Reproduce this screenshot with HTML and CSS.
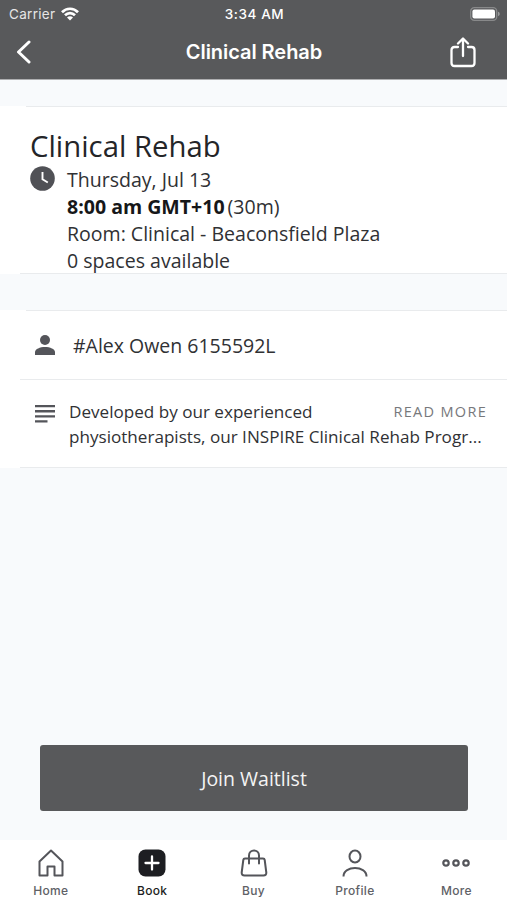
FILE: index.html
```html
<!DOCTYPE html>
<html lang="en">
<head>
    <meta charset="UTF-8">
    <meta name="viewport" content="width=device-width, initial-scale=1.0">
    <title>Clinical Rehab</title>
    <link rel="stylesheet" href="styles.css">
</head>
<body>

<header class="header">
    <div class="status-bar">
        <div class="carrier">
            <span>Carrier</span>
            <svg width="18" height="14" viewBox="0 0 18 14" fill="none" stroke="#fff" stroke-width="2.7">
                <path d="M1 5.2C5.5.6 12.5.6 17 5.2"/>
                <path d="M4 8.3C6.9 5.4 11.1 5.4 14 8.3"/>
                <path d="M9 13.6L6 10.6C7.7 8.9 10.3 8.9 12 10.6Z" fill="#fff" stroke="none"/>
            </svg>
        </div>
        <div class="time">3:34 AM</div>
        <div class="battery">
            <svg width="30" height="14" viewBox="0 0 30 14">
                <rect x=".7" y=".7" width="26" height="12.6" rx="3.6" fill="none" stroke="#88898a" stroke-width="1.3"/>
                <rect x="2.4" y="2.4" width="22.6" height="9.2" rx="2" fill="#fff"/>
                <path d="M28 4.8C30.3 5.4 30.3 8.6 28 9.2Z" fill="#98999a"/>
            </svg>
        </div>
    </div>
    <div class="nav-bar">
        <a class="back" href="#">
            <svg width="16" height="24" viewBox="0 0 16 24" fill="none" stroke="#fff" stroke-width="3" stroke-linecap="round" stroke-linejoin="round">
                <path d="M13 2L2.5 12L13 22"/>
            </svg>
        </a>
        <h1>Clinical Rehab</h1>
        <a class="share" href="#">
            <svg width="26" height="31" viewBox="0 0 26 31" fill="none" stroke="#fff" stroke-width="2.3" stroke-linecap="round" stroke-linejoin="round">
                <path d="M8 10H4.5Q1.5 10 1.5 13V26Q1.5 29 4.5 29H21.5Q24.5 29 24.5 26V13Q24.5 10 21.5 10H18"/>
                <path d="M13 19V2M8 6.5L13 1.5L18 6.5"/>
            </svg>
        </a>
    </div>
</header>

<main class="content">
    <section class="card summary">
        <h2>Clinical Rehab</h2>
        <div class="details">
            <svg width="25" height="25" viewBox="0 0 25 25">
                <circle cx="12.5" cy="12.5" r="12.3" fill="#505156"/>
                <path d="M12.5 6V13.2L17.8 16.5" fill="none" stroke="#fff" stroke-width="1.9"/>
            </svg>
            <div class="lines">
                <p>Thursday, Jul 13</p>
                <p><strong>8:00 am GMT+10</strong><span class="duration">(30m)</span></p>
                <p>Room: Clinical - Beaconsfield Plaza</p>
                <p>0 spaces available</p>
            </div>
        </div>
    </section>

    <section class="card info">
        <div class="staff">
            <svg width="20" height="20" viewBox="0 0 20 20" fill="#54555a">
                <circle cx="10" cy="5" r="5"/>
                <path d="M0 20V17C0 14 5 12 10 12S20 14 20 17V20Z"/>
            </svg>
            <span>#Alex Owen 6155592L</span>
        </div>
        <div class="description">
            <svg width="20" height="18" viewBox="0 0 20 18" fill="#54555a">
                <path d="M0 0H20V2.3H0ZM0 5.1H20V7.4H0ZM0 10.2H20V12.5H0ZM0 15.2H12.5V17.5H0Z"/>
            </svg>
            <div class="text">
                <div class="first-line">
                    <span>Developed by our experienced</span>
                    <a class="read-more" href="#">READ MORE</a>
                </div>
                <div>physiotherapists, our INSPIRE Clinical Rehab Progr...</div>
            </div>
        </div>
    </section>

    <button class="join-button" type="button">Join Waitlist</button>
</main>

<nav class="tab-bar">
    <a class="tab" href="#">
        <svg width="30" height="30" viewBox="0 0 30 30" fill="none" stroke="#54555a" stroke-width="2" stroke-linejoin="round">
            <path d="M3.5 13.5L15 2.5L26.5 13.5V27.5H18.5V18.5H11.5V27.5H3.5Z"/>
        </svg>
        <span>Home</span>
    </a>
    <a class="tab active" href="#">
        <svg width="30" height="30" viewBox="0 0 30 30">
            <rect x="1.5" y="1.5" width="27" height="27" rx="7" fill="#1d1e22"/>
            <path d="M8.5 15H21.5M15 8.5V21.5" stroke="#fff" stroke-width="2.3" stroke-linecap="round"/>
        </svg>
        <span>Book</span>
    </a>
    <a class="tab" href="#">
        <svg width="30" height="30" viewBox="0 0 30 30" fill="none" stroke="#54555a" stroke-width="2" stroke-linecap="round" stroke-linejoin="round">
            <path d="M6 10.5H24Q25.5 10.5 25.7 12L27.3 24.5Q27.5 27.5 24.5 27.5H5.5Q2.5 27.5 2.7 24.5L4.3 12Q4.5 10.5 6 10.5Z"/>
            <path d="M10 15.5V7.5C10 .8 20 .8 20 7.5V15.5"/>
        </svg>
        <span>Buy</span>
    </a>
    <a class="tab" href="#">
        <svg width="30" height="30" viewBox="0 0 30 30" fill="none" stroke="#54555a" stroke-width="2">
            <ellipse cx="15" cy="8.5" rx="5.5" ry="6"/>
            <path d="M3.5 28.5C3.5 17.3 26.5 17.3 26.5 28.5"/>
        </svg>
        <span>Profile</span>
    </a>
    <a class="tab" href="#">
        <svg width="30" height="30" viewBox="0 0 30 30" fill="none" stroke="#54555a" stroke-width="2.2">
            <circle cx="5" cy="15" r="2.7"/>
            <circle cx="15" cy="15" r="2.7"/>
            <circle cx="25" cy="15" r="2.7"/>
        </svg>
        <span>More</span>
    </a>
</nav>

</body>
</html>
```
FILE: styles.css
```css
* {
    box-sizing: border-box;
}

body {
    font-family: "Open Sans", sans-serif;
    background-color: #f8fafc;
    color: #303134;
    margin: 0;
    height: 900px;
    display: flex;
    flex-direction: column;
    overflow: hidden;
}

h1, h2, p {
    margin: 0;
}

a {
    color: inherit;
    text-decoration: none;
}

svg {
    display: block;
    flex: none;
}

/* Header */
.header {
    font-family: Inter, sans-serif;
    background-color: #58595b;
    color: #fff;
    height: 80px;
    border-bottom: 1px solid #aeafb1;
}

.status-bar {
    display: grid;
    grid-template-columns: 1fr auto 1fr;
    align-items: center;
    height: 27px;
    padding: 0 7px 0 9px;
    font-size: 13.5px;
}

.carrier {
    display: flex;
    align-items: center;
    gap: 6px;
    color: #e6e6e6;
    letter-spacing: 0.3px;
}

.time {
    font-weight: 500;
    letter-spacing: 0.6px;
}

.battery {
    justify-self: end;
}

.nav-bar {
    display: grid;
    grid-template-columns: 1fr auto 1fr;
    align-items: center;
    height: 50px;
    padding: 0 31px 0 16px;
}

.nav-bar h1 {
    font-size: 20px;
    font-weight: 600;
    letter-spacing: -0.05px;
    transform: translateX(8px);
}

.share {
    justify-self: end;
}

/* Cards */
.content {
    flex: 1;
    display: flex;
    flex-direction: column;
    padding-top: 26px;
}

.card {
    background-color: #fff;
    background-image: linear-gradient(#e9ebed, #e9ebed), linear-gradient(#e9ebed, #e9ebed);
    background-size: calc(100% - 26px) 1px, calc(100% - 20px) 1px;
    background-position: right top, right bottom;
    background-repeat: no-repeat;
}

.summary {
    height: 168px;
    padding: 19px 30px 0;
}

.summary h2 {
    font-size: 29.3px;
    font-weight: 400;
    line-height: 42px;
    color: #242528;
}

.details {
    display: flex;
    gap: 12px;
    margin-top: -1px;
}

.lines {
    font-size: 19.55px;
    line-height: 27px;
}

.lines strong {
    color: #161719;
}

.duration {
    margin-left: 3px;
}

.info {
    height: 158px;
    margin-top: 36px;
}

.staff {
    display: flex;
    align-items: center;
    gap: 18px;
    height: 69px;
    padding: 1px 0 0 35px;
    font-size: 19.5px;
}

.description {
    display: flex;
    gap: 14px;
    height: 88px;
    margin-left: 20px;
    padding: 20px 20px 0 15px;
    border-top: 1px solid #e9ebed;
}

.description svg {
    margin-top: 5px;
}

.text {
    flex: 1;
    font-size: 17.1px;
    line-height: 24.5px;
    white-space: nowrap;
}

.first-line {
    display: flex;
    justify-content: space-between;
}

.read-more {
    font-size: 14.5px;
    letter-spacing: 1.3px;
    color: #77787b;
}

.join-button {
    font-family: inherit;
    font-size: 19.5px;
    background-color: #58595b;
    color: #f4f4f4;
    height: 66px;
    margin: auto 39px 29px 40px;
    padding: 0;
    border: none;
    border-radius: 3px;
    cursor: pointer;
}

/* Bottom tabs */
.tab-bar {
    display: flex;
    height: 60px;
    background-color: #fff;
}

.tab {
    flex: 1;
    display: flex;
    flex-direction: column;
    align-items: center;
    padding-top: 8px;
    font-family: Inter, sans-serif;
    font-size: 12px;
    font-weight: 500;
    line-height: 14px;
    letter-spacing: 0.3px;
    color: #606166;
}

.tab span {
    margin-top: 6px;
}

.tab.active {
    color: #1d1e22;
}
```
